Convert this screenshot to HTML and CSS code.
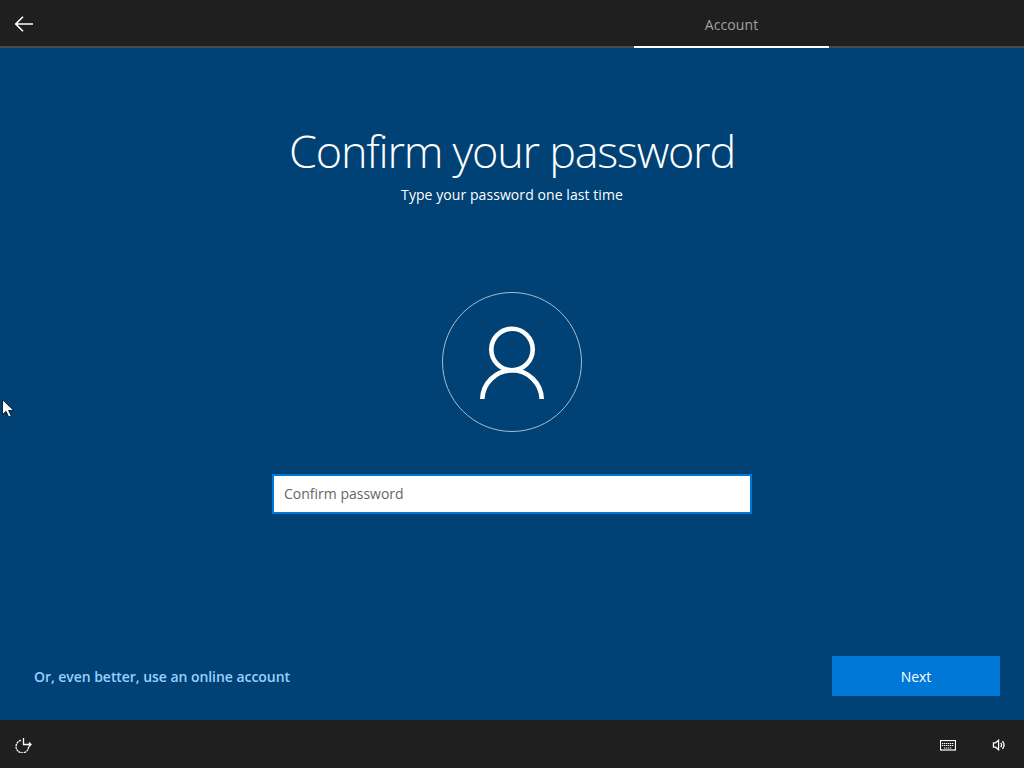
FILE: index.html
```html
<!DOCTYPE html>
<html lang="en">
<head>
<meta charset="utf-8">
<title>Account</title>
<link rel="stylesheet" href="styles.css">
</head>
<body>
<header class="topbar">
  <button class="back" aria-label="Back">
    <svg width="20" height="16" viewBox="0 0 20 16"><path d="M9 .7 1.700 8 9 15.300M1.700 8H19" fill="none" stroke="#fff" stroke-width="1.600"/></svg>
  </button>
  <div class="tab">Account</div>
</header>
<main class="main">
  <h1 class="title">Confirm your password</h1>
  <p class="subtitle">Type your password one last time</p>
  <div class="avatar">
    <svg width="66" height="74" viewBox="0 0 66 74"><g fill="none" stroke="#fff" stroke-width="4.600"><circle cx="33" cy="24.500" r="20.700"/><path d="M3.300 75a29.700 29.700 0 0 1 59.400 0"/></g></svg>
  </div>
  <div class="field"><input class="input" type="password" placeholder="Confirm password"></div>
  <div class="actions">
    <a class="link" href="#">Or, even better, use an online account</a>
    <button class="next">Next</button>
  </div>
  <svg class="cursor" width="14" height="20" viewBox="0 0 14 20"><path d="M1.500 .8v14.800l3.500-3.300 2.700 5.800 2.600-1.100-2.700-5.500h5.200z" fill="#fff" stroke="#000" stroke-width=".8"/></svg>
</main>
<footer class="bottombar">
  <svg class="ease" width="18" height="16" viewBox="0 0 18 16"><path d="M6 3.400a6.300 6.300 0 1 0 7.600 5.400" fill="none" stroke="#fff" stroke-width="1.300" stroke-dasharray="2.200 .6"/><path d="M8.500 1v6.500H16M14 5.500l2 2-2 2" fill="none" stroke="#fff" stroke-width="1.300"/></svg>
  <div class="tray">
    <svg width="16" height="11" viewBox="0 0 16 11"><g fill="none" stroke="#fff" stroke-width="1.200"><rect x=".5" y=".5" width="15" height="9.500"/><path d="M2 3.500h12M2 5.500h12M4 8h8" stroke-dasharray="1.300 .7"/></g></svg>
    <svg width="14" height="12" viewBox="0 0 15 14"><g fill="none" stroke="#fff" stroke-width="1.500"><path d="M1 4.500h2.500L7 1.500v11L3.500 9.500H1zM9.500 4.500a4 4 0 0 1 0 5M11.500 2.500a7 7 0 0 1 0 9"/></g></svg>
  </div>
</footer>
</body>
</html>
```
FILE: styles.css
```css
* { box-sizing: border-box; }
html, body { margin: 0; height: 100%; }
body {
  width: 1024px;
  height: 768px;
  overflow: hidden;
  display: flex;
  flex-direction: column;
  background: #004275;
  color: #fff;
  font-family: "Open Sans", "Noto Sans", sans-serif;
}
.topbar {
  height: 48px;
  flex: none;
  display: flex;
  justify-content: space-between;
  background: #1f1f1f;
  border-bottom: 2px solid #4a4a4a;
  padding-right: 195px;
}
.back {
  width: 48px;
  height: 46px;
  padding: 2px 0 0;
  border: 0;
  background: none;
  display: flex;
  align-items: center;
  justify-content: center;
}
.tab {
  width: 195px;
  height: 48px;
  padding-top: 15px;
  text-align: center;
  font-size: 14px;
  letter-spacing: .1px;
  line-height: 20px;
  color: #a0a0a0;
  border-bottom: 2px solid #fff;
}
.main {
  position: relative;
  flex: 1;
  display: flex;
  flex-direction: column;
  align-items: center;
  padding-top: 73px;
}
.title {
  margin: 0;
  font-size: 45px;
  font-weight: 300;
  letter-spacing: -1.25px;
  line-height: 60px;
}
.subtitle {
  margin: 4px 0 0;
  font-size: 14px;
  letter-spacing: .07px;
  line-height: 20px;
}
.avatar {
  margin-top: 87px;
  width: 140px;
  height: 140px;
  border: 1px solid #a6bdd0;
  border-radius: 50%;
  display: flex;
  align-items: center;
  justify-content: center;
}
.field { margin-top: 42px; }
.input {
  display: block;
  width: 480px;
  height: 40px;
  padding: 0 10px 2px;
  border: 2px solid #0078d7;
  background: #fff;
  outline: 0;
  font: 14px "Open Sans", "Noto Sans", sans-serif;
}
.input::placeholder { color: #666; opacity: 1; }
.actions {
  margin-top: auto;
  margin-bottom: 24px;
  width: 100%;
  padding: 0 24px 0 34px;
  display: flex;
  align-items: center;
  justify-content: space-between;
}
.link {
  color: #99d0ff;
  font-size: 14px;
  font-weight: 600;
  letter-spacing: -.05px;
  text-decoration: none;
}
.next {
  width: 168px;
  height: 40px;
  border: 0;
  background: #0078d7;
  color: #fff;
  font: 14px "Open Sans", "Noto Sans", sans-serif;
}
.cursor { position: absolute; left: 1px; top: 351px; }
.bottombar {
  height: 48px;
  flex: none;
  display: flex;
  align-items: center;
  justify-content: space-between;
  background: #1f1f1f;
  padding: 2px 18px 0 15px;
}
.tray {
  display: flex;
  align-items: center;
  gap: 36px;
}
```
